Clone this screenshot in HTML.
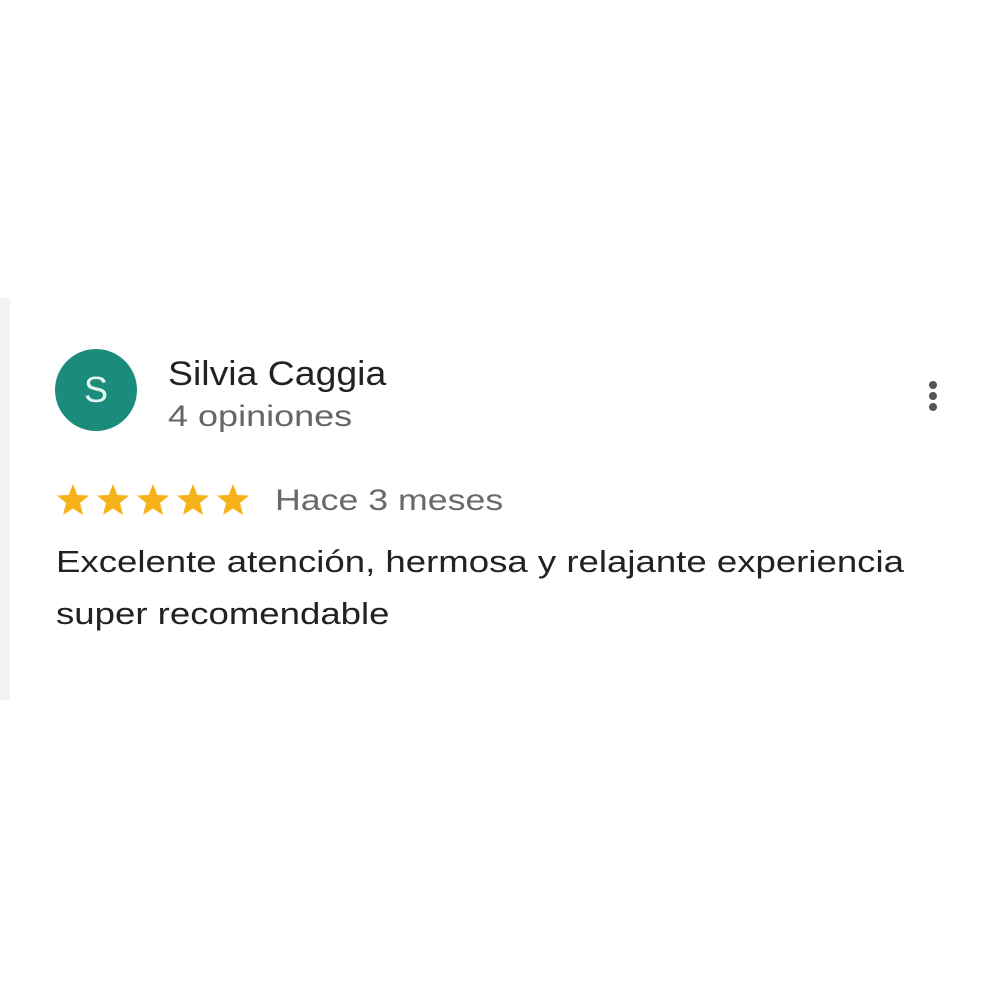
<!DOCTYPE html>
<html><head><meta charset="utf-8"><style>
html,body{margin:0;padding:0;background:#fff;}
body{width:1000px;height:1000px;position:relative;overflow:hidden;font-family:"Liberation Sans",Arial,sans-serif;}
.strip{position:absolute;left:0;top:298px;width:10px;height:402px;background:#f3f3f3;}
.av{position:absolute;left:55px;top:349px;width:82px;height:82px;border-radius:50%;background:#1b8c7b;color:#e6f5f1;font-size:36px;text-align:center;line-height:82px;}
.t{position:absolute;white-space:nowrap;transform-origin:0 0;}
.name{left:168px;top:355px;font-size:34px;color:#222;transform:scaleX(1.1);}
.op{left:168px;top:400px;font-size:30px;color:#666;transform:scaleX(1.2);}
.date{left:275px;top:484px;font-size:30px;color:#6a6a6a;transform:scaleX(1.19);}
.body{left:56px;top:536px;font-size:31px;color:#222;line-height:52px;transform:scaleX(1.18);}
.dots{position:absolute;left:929px;top:381px;}
.dots i{display:block;width:8px;height:8px;border-radius:50%;background:#555;margin-bottom:3px;}
.stars{position:absolute;left:56px;top:483px;}
</style></head><body>
<div class="strip"></div>
<div class="av">S</div>
<div class="t name">Silvia Caggia</div>
<div class="t op">4 opiniones</div>
<div class="dots"><i></i><i></i><i></i></div>
<svg class="stars" width="200" height="36" viewBox="0 0 200 36">
<defs><polygon id="s" points="17,1 21.4,12 33,12.5 24,20 27,32 17,25.5 7,32 10,20 1,12.5 12.6,12" fill="#f6b21b"/></defs>
<use href="#s" x="0"/><use href="#s" x="40"/><use href="#s" x="80"/><use href="#s" x="120"/><use href="#s" x="160"/>
</svg>
<div class="t date">Hace 3 meses</div>
<div class="t body">Excelente atención, hermosa y relajante experiencia<br>super recomendable</div>
</body></html>
